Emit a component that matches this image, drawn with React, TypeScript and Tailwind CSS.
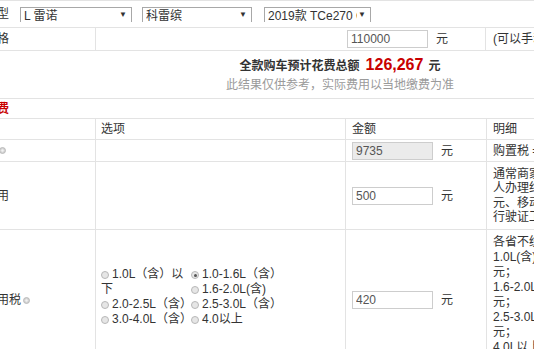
import React from 'react';

const Help = () => (
    <svg width="7" height="7" viewBox="0 0 7 7" className="inline-block ml-[2px] align-middle">
        <circle cx="3.5" cy="3.5" r="3" fill="#d4d4d4" stroke="#b3b3b3" strokeWidth="0.8" />
        <circle cx="3.5" cy="3.5" r="1.2" fill="#f2f2f2" />
    </svg>
);

const Radio = ({ checked }: { checked?: boolean }) => (
    <span className="inline-block w-[8px] h-[8px] rounded-full border border-[#b8b8b8] bg-[#e6e6e6] mr-[3px] align-[-1px] relative">
        {checked && <span className="absolute left-[1.5px] top-[1.5px] w-[3px] h-[3px] rounded-full bg-[#555]" />}
    </span>
);

const Amount = ({ value, grey }: { value: string; grey?: boolean }) => (
    <div className="flex items-center">
        <input
            readOnly
            value={value}
            className={`w-[81px] h-[18px] border border-[#cdcdcd] px-[3px] text-[12px] text-[#555] outline-none ${grey ? 'bg-[#ebebeb]' : 'bg-white'}`}
        />
        <span className="ml-[8px]">元</span>
    </div>
);

const FakeSelect = ({ text, className }: { text: string; className: string }) => (
    <div className={`${className} shrink-0 h-[15px] border-t border-l border-r border-[#a8a8a8] flex justify-between overflow-hidden pl-[3px] pr-[4px]`}>
        <span className="min-w-0 leading-[17px] whitespace-nowrap overflow-hidden">{text}</span>
        <span className="shrink-0 text-[8px] leading-[13px] ml-[1px]">▼</span>
    </div>
);

const options = [
    { label: '1.0L（含）以下' },
    { label: '1.0-1.6L（含）', checked: true },
    { label: '1.6-2.0L(含)' },
    { label: '2.0-2.5L（含）' },
    { label: '2.5-3.0L（含）' },
    { label: '3.0-4.0L（含）' },
    { label: '4.0以上' },
];

export default function App() {
    return (
        <div className="w-[534px] h-[349px] overflow-hidden bg-white text-[12px] text-[#333] font-['Liberation_Sans','Noto_Sans_CJK_SC',sans-serif]">
            <div className="-ml-[45px] w-[720px]">
                {/* car choice */}
                <div className="border-t border-[#e3e3e3]">
                    <div className="h-[27px] flex items-center border-b border-[#e3e3e3] pl-[6px]">
                        <span className="w-[48px] shrink-0">选择车型</span>
                        <FakeSelect text="L 雷诺" className="ml-[11px] w-[112px]" />
                        <FakeSelect text="科雷缤" className="ml-[10px] w-[110px]" />
                        <FakeSelect text="2019款 TCe270 CVT" className="ml-[12px] w-[107px]" />
                    </div>
                    <div className="h-[23px] flex border-b border-[#e3e3e3]">
                        <div className="w-[140px] shrink-0 pl-[6px] flex items-center">裸车价格</div>
                        <div className="w-[252px] shrink-0 border-l border-[#e3e3e3]" />
                        <div className="w-[138px] shrink-0 flex items-center">
                            <Amount value="110000" />
                        </div>
                        <div className="flex-1 min-w-0 border-l border-[#e3e3e3] pl-[7px] flex items-center whitespace-nowrap">(可以手动修改)</div>
                    </div>
                </div>

                {/* total */}
                <div className="h-[47px] ml-[189px] w-[392px] text-center pt-[4px]">
                    <div className="leading-[20px]">
                        <span className="font-bold">全款购车预计花费总额</span>
                        <span className="text-[16px] font-bold text-[#c80000] ml-[6px] mr-[5px]">126,267</span>
                        <span className="font-bold">元</span>
                    </div>
                    <div className="text-[#9a9a9a] leading-[16px] mt-[1px]">此结果仅供参考，实际费用以当地缴费为准</div>
                </div>

                {/* section */}
                <div className="h-[21px] border-t border-b border-[#e3e3e3] pl-[6px] flex items-center font-bold text-[#c80000]">必要花费</div>

                <div>
                    <div className="h-[21px] flex border-b border-[#e3e3e3]">
                        <div className="w-[140px] shrink-0" />
                        <div className="w-[250px] shrink-0 border-l border-[#e3e3e3] pl-[5px] flex items-center">选项</div>
                        <div className="w-[141px] shrink-0 border-l border-[#e3e3e3] pl-[6px] flex items-center">金额</div>
                        <div className="flex-1 min-w-0 border-l border-[#e3e3e3] pl-[6px] flex items-center">明细</div>
                    </div>

                    <div className="h-[22px] flex border-b border-[#e3e3e3]">
                        <div className="w-[140px] shrink-0 pl-[6px] flex items-center whitespace-nowrap">
                            购置税<Help />
                        </div>
                        <div className="w-[250px] shrink-0 border-l border-[#e3e3e3]" />
                        <div className="w-[141px] shrink-0 border-l border-[#e3e3e3] pl-[6px] flex items-center">
                            <Amount value="9735" grey />
                        </div>
                        <div className="flex-1 min-w-0 border-l border-[#e3e3e3] pl-[6px] flex items-center whitespace-nowrap">购置税 = 购车款/(1+13%)×购置税率(10%)</div>
                    </div>

                    <div className="h-[68px] flex border-b border-[#e3e3e3]">
                        <div className="w-[140px] shrink-0 pl-[6px] flex items-center">上牌费用</div>
                        <div className="w-[250px] shrink-0 border-l border-[#e3e3e3]" />
                        <div className="w-[141px] shrink-0 border-l border-[#e3e3e3] pl-[6px] flex items-center">
                            <Amount value="500" />
                        </div>
                        <div className="flex-1 min-w-0 border-l border-[#e3e3e3] pl-[6px] flex flex-col justify-center leading-[14.5px] whitespace-nowrap">
                            <span>通常商家提供的上牌服务收费约500元，个</span>
                            <span>人办理约373元，其中选号费50元、拍照20</span>
                            <span>元、移动证费用5元、</span>
                            <span>行驶证工本费及牌照费用</span>
                        </div>
                    </div>

                    <div className="flex border-b border-[#e3e3e3]">
                        <div className="w-[140px] shrink-0 pl-[6px] flex items-center whitespace-nowrap">
                            车船使用税<Help />
                        </div>
                        <div className="w-[250px] shrink-0 border-l border-[#e3e3e3] pl-[5px] flex items-center">
                            <div className="w-[240px] leading-[15px] mt-[-6px]">
                                {options.map((o, i) => (
                                    <div key={i} className={`float-left w-[90px] ${i === 0 ? '' : 'whitespace-nowrap'}`}>
                                        <Radio checked={o.checked} />
                                        {o.label}
                                    </div>
                                ))}
                            </div>
                        </div>
                        <div className="w-[141px] shrink-0 border-l border-[#e3e3e3] pl-[6px] flex items-center">
                            <Amount value="420" />
                        </div>
                        <div className="flex-1 min-w-0 border-l border-[#e3e3e3] pl-[6px] pt-[5px] pb-[0px] flex flex-col leading-[15px] whitespace-nowrap">
                            <span>各省不统一，以北京为例：</span>
                            <span>1.0L(含)以下300元；1.0-1.6L(含)420</span>
                            <span>元；</span>
                            <span>1.6-2.0L(含)480元；2.0-2.5L(含)900</span>
                            <span>元；</span>
                            <span>2.5-3.0L(含)1920元；3.0-4.0L(含)3480</span>
                            <span>元；</span>
                            <span>4.0L以上5280</span>
                            <span>元等</span>
                        </div>
                    </div>
                </div>
            </div>
        </div>
    );
}
